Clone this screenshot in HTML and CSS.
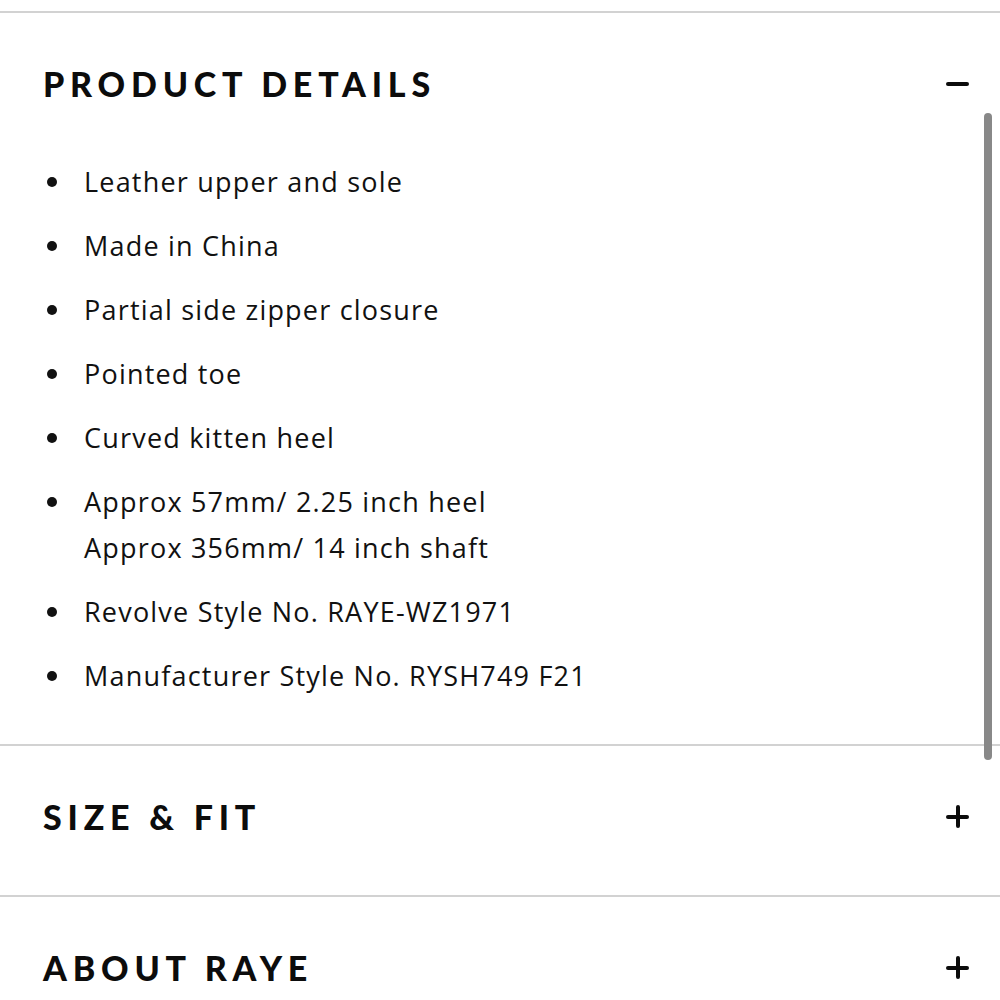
FILE: index.html
```html
<!DOCTYPE html>
<html>
<head>
<meta charset="utf-8">
<link rel="stylesheet" href="styles.css">
</head>
<body>
<div class="page">
  <section class="acc acc-open">
    <div class="acc-head">
      <h2 class="acc-title">PRODUCT DETAILS</h2>
      <span class="icon icon-minus"></span>
    </div>
    <ul class="details">
      <li>Leather upper and sole</li>
      <li>Made in China</li>
      <li>Partial side zipper closure</li>
      <li>Pointed toe</li>
      <li>Curved kitten heel</li>
      <li>Approx 57mm/ 2.25 inch heel<br>Approx 356mm/ 14 inch shaft</li>
      <li>Revolve Style No. RAYE-WZ1971</li>
      <li>Manufacturer Style No. RYSH749 F21</li>
    </ul>
  </section>
  <section class="acc">
    <div class="acc-head">
      <h2 class="acc-title">SIZE &amp; FIT</h2>
      <span class="icon icon-plus"></span>
    </div>
  </section>
  <section class="acc">
    <div class="acc-head">
      <h2 class="acc-title">ABOUT RAYE</h2>
      <span class="icon icon-plus"></span>
    </div>
  </section>
  <div class="scrollbar"></div>
</div>
</body>
</html>
```

FILE: styles.css
```css
html, body {
  margin: 0;
  padding: 0;
  background: #fff;
}
.page {
  position: relative;
  padding-top: 11px;
  color: #111;
}
.acc {
  border-top: 2px solid #d2d2d2;
}
.acc-head {
  box-sizing: border-box;
  height: 149px;
  display: flex;
  align-items: center;
  justify-content: space-between;
  padding: 0 31px 8px 43px;
}
.acc-title {
  margin: 0;
  font-family: "Lato", "Liberation Sans", sans-serif;
  font-weight: 900;
  font-size: 34px;
  letter-spacing: 5.8px;
  color: #0c0c0c;
}
.icon {
  position: relative;
  width: 23px;
  height: 23px;
  display: block;
}
.icon::before,
.icon::after {
  content: "";
  position: absolute;
  background: #0c0c0c;
  border-radius: 2px;
}
.icon::before {
  left: 0;
  right: 0;
  top: 10px;
  height: 4px;
}
.icon-plus::after {
  top: 0;
  bottom: 0;
  left: 10px;
  width: 4px;
}
.details {
  list-style: none;
  margin: -3px 0 0;
  padding: 0 0 45px 84px;
  font-family: "Open Sans", "Liberation Sans", sans-serif;
  font-size: 27px;
  line-height: 46px;
  letter-spacing: 1.2px;
  color: #111;
}
.details li {
  position: relative;
  margin-bottom: 18px;
}
.details li:last-child {
  margin-bottom: 0;
}
.details li::before {
  content: "";
  position: absolute;
  left: -37px;
  top: 18px;
  width: 10px;
  height: 10px;
  border-radius: 50%;
  background: #111;
}
.scrollbar {
  position: absolute;
  left: 984px;
  top: 113px;
  width: 8px;
  height: 647px;
  border-radius: 4px;
  background: #888;
}
```
